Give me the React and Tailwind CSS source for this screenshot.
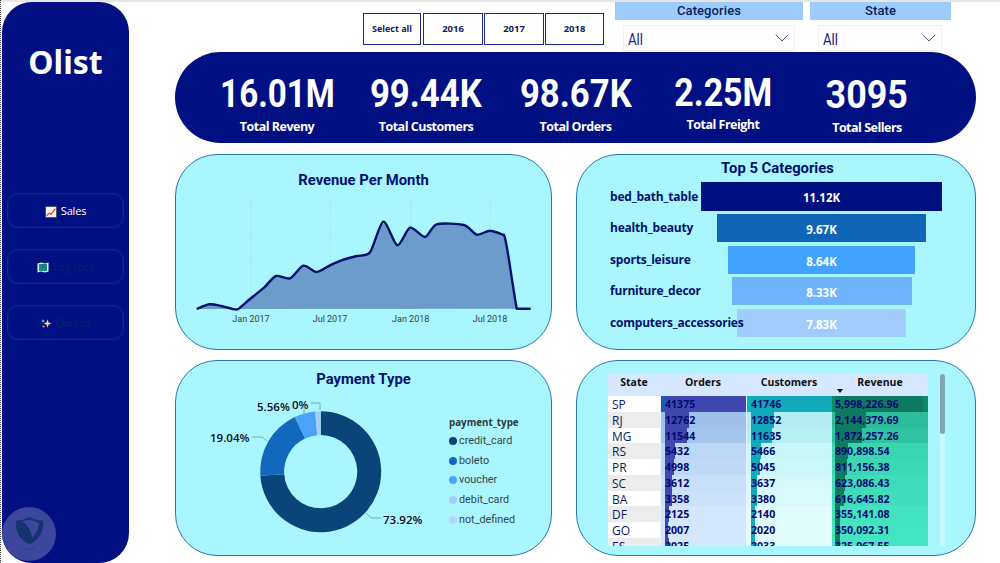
import React from "react";
import { ChevronDown } from "lucide-react";

const din = { fontFamily: "'Roboto','Liberation Sans',sans-serif" };

const toPage = ([x, y]) => [170 + x / 3, 150 + y / 3];
const linePts = [[80,477],[118,463],[150,467],[185,476],[205,477],[240,447],[282,413],[318,378],[360,385],[400,347],[440,366],[480,346],[520,329],[560,318],[600,307],[640,215],[682,286],[720,233],[765,261],[800,223],[882,225],[920,254],[960,242],[1002,255]].map(toPage);

function smooth(p) {
  let d = `M${p[0][0].toFixed(1)} ${p[0][1].toFixed(1)}`;
  for (let i = 0; i < p.length - 1; i++) {
    const a = p[Math.max(i - 1, 0)], b = p[i], c = p[i + 1], e = p[Math.min(i + 2, p.length - 1)];
    const t = 0.13;
    d += ` C${(b[0] + (c[0] - a[0]) * t).toFixed(1)} ${(b[1] + (c[1] - a[1]) * t).toFixed(1)} ${(c[0] - (e[0] - b[0]) * t).toFixed(1)} ${(c[1] - (e[1] - b[1]) * t).toFixed(1)} ${c[0].toFixed(1)} ${c[1].toFixed(1)}`;
  }
  return d + " C507 241 510 270 516.7 308.7 L530.7 308.7";
}

function arc(cx, cy, R, r, from, to) {
  const pt = (rad, f) => {
    const a = (f / 100) * 2 * Math.PI - Math.PI / 2;
    return `${(cx + rad * Math.cos(a)).toFixed(2)} ${(cy + rad * Math.sin(a)).toFixed(2)}`;
  };
  const big = to - from > 50 ? 1 : 0;
  return `M${pt(R, from)} A${R} ${R} 0 ${big} 1 ${pt(R, to)} L${pt(r, to)} A${r} ${r} 0 ${big} 0 ${pt(r, from)} Z`;
}

const slices = [
  [0, 73.92, "#0a4478"],
  [73.92, 92.96, "#1168bc"],
  [92.96, 98.52, "#4aa3f8"],
  [98.52, 100, "#a8cdf8"],
];

const kpis = [
  { v: "16.01M", l: "Total Reveny", c: "pt-[24px]", g: "mt-[6px]", s: "scale-x-[0.85]" },
  { v: "99.44K", l: "Total Customers", c: "pt-[24px]", g: "mt-[6px]", s: "scale-x-[0.89]" },
  { v: "98.67K", l: "Total Orders", c: "pt-[24px]", g: "mt-[6px]", s: "scale-x-[0.89]" },
  { v: "2.25M", l: "Total Freight", c: "pt-[23px]", g: "mt-[5px]", s: "scale-x-[0.87]" },
  { v: "3095", l: "Total Sellers", c: "pt-[25px]", g: "mt-[6px]", s: "scale-x-[0.92]" },
];

const cats = [
  { n: "bed_bath_table", v: "11.12K", w: 241, c: "bg-[#000f80]", h: "h-[29px] mb-[3px]" },
  { n: "health_beauty", v: "9.67K", w: 209, c: "bg-[#0f66b8]", h: "h-[28px] mb-[4px]" },
  { n: "sports_leisure", v: "8.64K", w: 187, c: "bg-[#41a3ff]", h: "h-[28px] mb-[3px]" },
  { n: "furniture_decor", v: "8.33K", w: 180, c: "bg-[#70b4fb]", h: "h-[28px] mb-[4px]" },
  { n: "computers_accessories", v: "7.83K", w: 169, c: "bg-[#a0cdfc]", h: "h-[28px]" },
];

const legend = [
  ["credit_card", "bg-[#0a4478]"],
  ["boleto", "bg-[#1168bc]"],
  ["voucher", "bg-[#4aa3f8]"],
  ["debit_card", "bg-[#a8cdf8]"],
  ["not_defined", "bg-[#b4d2fa]"],
];

const rows = [
  ["SP", "41375", "41746", "5,998,226.96", 81, 81, 88, "bg-[#1c5cb8]", "bg-[#06b4bf]", "bg-[#0b8a70]"],
  ["RJ", "12762", "12852", "2,144,379.69", 24, 23, 31, "bg-[#9fc1e9]", "bg-[#b2ecf0]", "bg-[#2cbd9b]"],
  ["MG", "11544", "11635", "1,872,257.26", 22, 21, 27, "bg-[#a3c5ec]", "bg-[#b8eff3]", "bg-[#2fc3a1]"],
  ["RS", "5432", "5466", "890,898.54", 10, 10, 13, "bg-[#bcd7f6]", "bg-[#c8f7f9]", "bg-[#3ad6b2]"],
  ["PR", "4998", "5045", "811,156.38", 9, 9, 12, "bg-[#bfd9f7]", "bg-[#ccf8fa]", "bg-[#3bd8b4]"],
  ["SC", "3612", "3637", "623,086.43", 7, 6, 10, "bg-[#c9dff9]", "bg-[#d6fafb]", "bg-[#3edcb8]"],
  ["BA", "3358", "3380", "616,645.82", 7, 6, 9, "bg-[#cbe0f9]", "bg-[#d8fafb]", "bg-[#3fddb9]"],
  ["DF", "2125", "2140", "355,141.08", 4, 4, 5, "bg-[#d3e6fb]", "bg-[#e0fcfc]", "bg-[#44e3c0]"],
  ["GO", "2007", "2020", "350,092.31", 3, 4, 5, "bg-[#d5e7fb]", "bg-[#e2fcfc]", "bg-[#44e4c0]"],
  ["ES", "2025", "2033", "325,967.55", 4, 4, 5, "bg-[#d5e7fb]", "bg-[#e2fcfc]", "bg-[#45e5c1]"],
];

function Card({ className = "", children }) {
  return (
    <div className={`h-[196px] rounded-[42px] bg-[#aaf6fe] border border-[#2a78b0] overflow-hidden ${className}`}>
      {children}
    </div>
  );
}

function Title({ children, className = "" }) {
  return (
    <div style={din} className={`text-center font-bold text-[14.8px] leading-5 text-[#00106e] ${className}`}>
      {children}
    </div>
  );
}

function NavButton({ icon, label, text }) {
  return (
    <div className="h-[35px] mx-[5px] pt-[2px] rounded-[10px] border border-[#0b2a8c] shadow-[inset_0_0_3px_#0b2a8c] flex items-center justify-center gap-[4px] text-[11px] tracking-[-0.2px]">
      {icon}
      <span className={text}>{label}</span>
    </div>
  );
}

function Cell({ value, pct, bg, bar, offset, sep }) {
  return (
    <div className={`relative h-full ${bg} ${sep}`}>
      <div className={`absolute top-0 bottom-0 ${offset} ${bar}`} style={{ width: pct + "px" }} />
      <span className={`absolute top-0 bottom-0 ${offset} flex items-center text-[10.6px] font-bold text-[#000a70] whitespace-nowrap`}>{value}</span>
    </div>
  );
}

function Dropdown({ className }) {
  return (
    <div className={`ml-[8px] mt-[5px] h-[26px] border border-[#f2f2f2] flex items-center justify-between pl-[4px] text-[#1a237e] ${className}`} style={din}>
      <span className="inline-block origin-left scale-x-[0.82] pt-[3px] text-[16px]">All</span>
      <ChevronDown size={24} strokeWidth={0.8} />
    </div>
  );
}

export default function App() {
  const area = smooth(linePts);
  return (
    <div className="relative w-[1000px] h-[563px] overflow-hidden bg-white flex" style={{ fontFamily: "'Open Sans','Noto Sans',sans-serif" }}>
      <div className="absolute left-0 top-0 w-full h-[2px] bg-[#e6e6e6]" />
      <div className="absolute left-0 top-0 h-full border-l border-dotted border-[#333]" />

      <aside className="relative ml-[2px] mt-[2px] w-[127px] h-[561px] rounded-[30px] bg-[#000f82] shrink-0">
        <div className="pt-[40px] h-[191px] text-center text-white font-bold text-[32px] leading-10" style={{ fontFamily: "'Noto Sans','Open Sans',sans-serif" }}>Olist</div>
        <div className="flex flex-col gap-[21px]">
          <NavButton
            label="Sales"
            text="text-white"
            icon={
              <svg width="12" height="12" viewBox="0 0 11 11">
                <rect x="0.5" y="0.5" width="10" height="10" fill="#f5f2ee" stroke="#333" strokeWidth="0.5" />
                <path d="M1.5 9L4 6.5 5.5 7.5 9.5 2.5" fill="none" stroke="#d8503c" strokeWidth="1.2" />
              </svg>
            }
          />
          <NavButton
            label="Logistics"
            text="text-[#0a2272]"
            icon={
              <svg width="12" height="11" viewBox="0 0 12 11">
                <path d="M0.5 1.5L4 0.5 8 1.5 11.5 0.5V9.5L8 10.5 4 9.5 0.5 10.5Z" fill="#e8f1e8" />
                <rect x="2" y="2" width="8" height="7" fill="#1a8a7a" />
                <rect x="5" y="3" width="3" height="3" fill="#2464c8" />
              </svg>
            }
          />
          <NavButton
            label="Quality"
            text="text-[#0a2272]"
            icon={
              <svg width="11" height="11" viewBox="0 0 11 11">
                <path d="M6.5 1.5L7.6 4.4 10.5 5.5 7.6 6.6 6.5 9.8 5.4 6.6 2.5 5.5 5.4 4.4Z" fill="#ffe23c" />
                <path d="M2 1L2.5 2.5 4 3 2.5 3.5 2 5 1.5 3.5 0 3 1.5 2.5Z" fill="#8fe6e0" />
                <circle cx="2.5" cy="8.5" r="1.1" fill="#f08a9a" />
              </svg>
            }
          />
        </div>
        <div className="absolute left-0 top-[505px] w-[54px] h-[54px] rounded-full bg-[#3c479c] flex flex-col items-center">
          <svg width="31" height="29" viewBox="0 0 34 32" className="mt-[9px]">
            <path d="M17 1C22 4 28 5 32 5 33 16 28 27 17 31 6 27 1 16 2 5 6 5 12 4 17 1Z" fill="#14336f" />
            <path d="M8 6C14 8 18 14 20 24 26 18 28 12 27 7 23 6 21 5 17 4" fill="#3c479c" />
          </svg>
          <span className="text-[6px] leading-[6px] text-[#2a3a88]" style={{ fontFamily: "'DejaVu Sans',sans-serif" }}>كميل</span>
        </div>
      </aside>

      <main className="ml-[46px] w-[801px] shrink-0">
        <div className="h-[52px] flex">
          <div className="ml-[188px] mt-[13px] flex gap-[1px] h-[32px]">
            <div className="h-full w-[58px] mr-[1px] text-[9px] border border-[#1b2a8a] bg-white flex items-center justify-center font-bold text-[#111a5e]">Select all</div>
            <div className="h-full w-[60px] text-[9.5px] border border-[#1b2a8a] bg-white flex items-center justify-center font-bold text-[#111a5e]">2016</div>
            <div className="h-full w-[60px] text-[9.5px] border border-[#1b2a8a] bg-white flex items-center justify-center font-bold text-[#111a5e]">2017</div>
            <div className="h-full w-[59px] text-[9.5px] border border-[#1b2a8a] bg-white flex items-center justify-center font-bold text-[#111a5e]">2018</div>
          </div>
          <div className="ml-[11px] w-[188px]">
            <div style={din} className="mt-[2px] h-[18px] bg-[#9dcbfb] text-center text-[13px] font-medium leading-[17px] tracking-[0.1px] text-[#0b1f5c]">Categories</div>
            <Dropdown className="w-[172px]" />
          </div>
          <div className="ml-[7px] w-[141px]">
            <div style={din} className="mt-[2px] h-[18px] bg-[#9dcbfb] text-center text-[13px] font-medium leading-[17px] tracking-[0.1px] text-[#0b1f5c]">State</div>
            <Dropdown className="w-[124px]" />
          </div>
        </div>

        <div className="h-[91px] rounded-[46px] bg-[#000f82] pl-[28px] grid grid-cols-[148px_150px_149px_146px_142px] text-white">
          {kpis.map((k) => (
            <div key={k.l} className={`text-center ${k.c}`}>
              <div style={din} className={`inline-block font-bold text-[39px] leading-[36px] ${k.s}`}>{k.v}</div>
              <div className={`font-bold text-[12.5px] leading-[16px] tracking-[-0.5px] ${k.g}`}>{k.l}</div>
            </div>
          ))}
        </div>

        <div className="mt-[11px] grid grid-cols-[377px_400px] gap-x-[24px] gap-y-[10px]">
          <Card>
            <Title className="pt-[15px] h-[41px] box-border">Revenue Per Month</Title>
            <svg width="375" height="153" viewBox="176 196 375 153" className="block">
              {[251, 330, 410.7, 490].map((x) => (
                <line key={x} x1={x} x2={x} y1="200" y2="309" stroke="#8fd8dc" strokeWidth="0.7" strokeDasharray="1.5 2" />
              ))}
              <path d={`${area} L196 309 Z`} fill="#6b9ccc" />
              <path d={area} fill="none" stroke="#00106e" strokeWidth="2.4" strokeLinejoin="round" />
              {[["Jan 2017", 251], ["Jul 2017", 330], ["Jan 2018", 410.7], ["Jul 2018", 490]].map(([t, x]) => (
                <text key={t} x={x} y="322" textAnchor="middle" fontSize="9" fill="#2f3d48" fontFamily="'Roboto',sans-serif">{t}</text>
              ))}
            </svg>
          </Card>

          <Card>
            <Title className="pt-[3px] pl-[3px] h-[27px] box-border">Top 5 Categories</Title>
            <div className="pl-[33px]">
              {cats.map((c) => (
                <div key={c.n} className={`flex items-center ${c.h}`}>
                  <span className="relative z-10 w-[91px] shrink-0 whitespace-nowrap font-bold text-[12px] tracking-[-0.2px] text-[#00106e]">{c.n}</span>
                  <div className="w-[241px] h-full flex justify-center">
                    <div className={`h-full pt-[3px] ${c.c} flex items-center justify-center text-white font-bold text-[11.5px]`} style={{ width: c.w + "px" }}>{c.v}</div>
                  </div>
                </div>
              ))}
            </div>
          </Card>

          <Card>
            <Title className="pt-[8px] h-[33px] box-border">Payment Type</Title>
            <div className="flex">
              <svg width="273" height="160" viewBox="176 394 273 160" className="block shrink-0">
                {slices.map(([a, b, c]) => (
                  <path key={c} d={arc(320.7, 471.7, 60.5, 36.6, a, b)} fill={c} />
                ))}
                <g fill="none" stroke="#6d9aa0" strokeWidth="0.8">
                  <path d="M252 437H262L267 441" />
                  <path d="M304 409V414" />
                  <path d="M311 403H320V410" />
                  <path d="M366 513L371 518H381" />
                </g>
                <g fontFamily="'Open Sans',sans-serif" fontSize="11.5" fontWeight="600" fill="#0a0a1e">
                  <text x="210" y="442">19.04%</text>
                  <text x="257" y="411">5.56%</text>
                  <text x="292" y="409">0%</text>
                  <text x="383" y="524">73.92%</text>
                </g>
              </svg>
              <div className="pt-[22px]">
                <div className="font-bold text-[9.8px] leading-[14px] text-[#2f3b42]">payment_type</div>
                <div className="mt-[1px] flex flex-col">
                  {legend.map(([n, c]) => (
                    <div key={n} style={din} className="h-[19.8px] flex items-center gap-[2px] text-[10.8px] text-[#33464d]">
                      <span className={`w-[8px] h-[8px] rounded-full ${c}`} />
                      {n}
                    </div>
                  ))}
                </div>
              </div>
            </div>
          </Card>

          <Card className="relative">
            <div className="ml-[31px] mt-[12px] w-[320px] h-[173px] overflow-hidden">
              <div className="relative h-[23px] bg-[#d6e8ff] grid grid-cols-[52px_86px_86px_96px] text-center text-[10.5px] font-bold text-[#111] leading-[17px] pt-[1px]">
                <span>State</span>
                <span>Orders</span>
                <span>Customers</span>
                <span>Revenue</span>
                <div className="absolute left-[229px] top-[16px] w-0 h-0 border-x-[3px] border-x-transparent border-t-[4px] border-t-[#111]" />
              </div>
              {rows.map((r, i) => (
                <div key={r[0]} className="h-[15.75px] grid grid-cols-[52px_86px_86px_96px]">
                  <div className={`h-full flex items-center pl-[4px] text-[12px] text-[#101a66] ${i % 2 === 0 ? "bg-white" : "bg-[#ececec]"}`}>{r[0]}</div>
                  <Cell value={r[1]} pct={r[4]} bg={r[7]} bar="bg-[#4048b0]" offset="left-[4px]" sep="border-l border-[#e8f4ff]" />
                  <Cell value={r[2]} pct={r[5]} bg={r[8]} bar="bg-[#12a9ba]" offset="left-[4px]" sep="border-l border-[#e8f4ff]" />
                  <Cell value={r[3]} pct={r[6]} bg={r[9]} bar="bg-[#0e7a62]" offset="left-[3px]" sep="" />
                </div>
              ))}
            </div>
            <div className="absolute left-[363px] top-[13px] w-[5px] h-[172px] rounded-full bg-[#c4fbff]">
              <div className="w-full h-[60px] rounded-full bg-[#7fa9ac]" />
            </div>
          </Card>
        </div>
      </main>
    </div>
  );
}
